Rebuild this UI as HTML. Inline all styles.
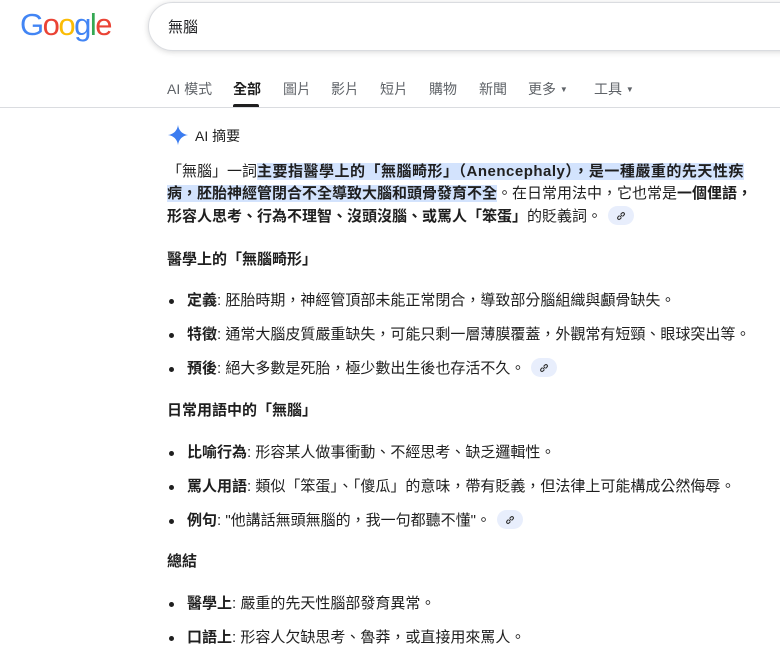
<!DOCTYPE html>
<html><head><meta charset="utf-8">
<style>
*{margin:0;padding:0;box-sizing:border-box}
body{width:780px;height:654px;overflow:hidden;background:#fff;font-family:"Liberation Sans","Noto Sans CJK TC",sans-serif;color:#1f1f1f;position:relative}
.a{position:absolute;white-space:nowrap}
.logo{left:20px;top:7px;font-size:31px;letter-spacing:-1.5px;font-family:"Liberation Sans",sans-serif}
.search{position:absolute;left:148px;top:2px;width:660px;height:49px;border:1px solid #dadce0;border-radius:25px;box-shadow:0 1px 6px rgba(32,33,36,.18)}
.nav{top:79px;font-size:14px;color:#5f6368}
.t{font-size:15px;line-height:22px}
b{font-weight:bold;color:#1f1f1f}
.hl{background:#d3e3fd}
.dot{position:absolute;width:5px;height:5px;border-radius:50%;background:#1f1f1f}
.lk{display:inline-block;width:26px;height:19px;border-radius:10px;background:#e8eefc;vertical-align:middle;margin-left:6px;position:relative;top:-2px}
.lk svg{position:absolute;left:8px;top:5px}
</style></head><body>
<div class="a logo"><span style="color:#4285f4">G</span><span style="color:#ea4335">o</span><span style="color:#fbbc05">o</span><span style="color:#4285f4">g</span><span style="color:#34a853">l</span><span style="color:#ea4335">e</span></div>
<div class="search"></div>
<div class="a" style="left:168px;top:16px;font-size:15px;color:#202124">無腦</div>

<div class="a nav" style="left:167px">AI 模式</div>
<div class="a nav" style="left:233px;color:#1f1f1f;font-weight:bold">全部</div>
<div class="a" style="left:233px;top:104px;width:26px;height:3px;background:#1f1f1f;border-radius:2px 2px 0 0"></div>
<div class="a nav" style="left:283px">圖片</div>
<div class="a nav" style="left:331px">影片</div>
<div class="a nav" style="left:380px">短片</div>
<div class="a nav" style="left:429px">購物</div>
<div class="a nav" style="left:479px">新聞</div>
<div class="a nav" style="left:528px">更多 <span style="font-size:8px;position:relative;top:-2px">▼</span></div>
<div class="a nav" style="left:594px">工具 <span style="font-size:8px;position:relative;top:-2px">▼</span></div>
<div class="a" style="left:0;top:107px;width:780px;height:1px;background:#dadce0"></div>

<svg class="a" style="left:167px;top:124px" width="22" height="22" viewBox="0 0 24 24"><path d="M12 1C12.6 7 17 11.4 23 12 17 12.6 12.6 17 12 23 11.4 17 7 12.6 1 12 7 11.4 11.4 7 12 1Z" fill="#3b7cf0"/></svg>
<div class="a" style="left:195px;top:126px;font-size:14px;color:#1f1f1f">AI 摘要</div>

<div class="a t" style="left:167px;top:161px">「無腦」一詞<span class="hl"><b style="letter-spacing:0.5px">主要指醫學上的「無腦畸形」（Anencephaly），是一種嚴重的先天性疾</b></span></div>
<div class="a t" style="left:167px;top:183px"><span class="hl"><b>病，胚胎神經管閉合不全導致大腦和頭骨發育不全</b></span>。在日常用法中，它也常是<b>一個俚語，</b></div>
<div class="a t" style="left:167px;top:206px"><b>形容人思考、行為不理智、沒頭沒腦、或罵人「笨蛋」</b>的貶義詞。<span class="lk"><svg width="10" height="10" viewBox="0 0 10 10"><path d="M4 6 6 4M3.5 4.5 2 6a1.4 1.4 0 0 0 2 2l1.5-1.5M6.5 5.5 8 4a1.4 1.4 0 0 0-2-2L4.5 3.5" stroke="#333" stroke-width="1.1" fill="none"/></svg></span></div>

<div class="a t" style="left:167px;top:249px"><b>醫學上的「無腦畸形」</b></div>
<div class="dot" style="left:169px;top:299px"></div><div class="a t" style="left:187px;top:290px"><b>定義</b>: 胚胎時期，神經管頂部未能正常閉合，導致部分腦組織與顱骨缺失。</div>
<div class="dot" style="left:169px;top:333px"></div><div class="a t" style="left:187px;top:324px"><b>特徵</b>: 通常大腦皮質嚴重缺失，可能只剩一層薄膜覆蓋，外觀常有短頸、眼球突出等。</div>
<div class="dot" style="left:169px;top:367px"></div><div class="a t" style="left:187px;top:358px"><b>預後</b>: 絕大多數是死胎，極少數出生後也存活不久。<span class="lk"><svg width="10" height="10" viewBox="0 0 10 10"><path d="M4 6 6 4M3.5 4.5 2 6a1.4 1.4 0 0 0 2 2l1.5-1.5M6.5 5.5 8 4a1.4 1.4 0 0 0-2-2L4.5 3.5" stroke="#333" stroke-width="1.1" fill="none"/></svg></span></div>

<div class="a t" style="left:167px;top:400px"><b>日常用語中的「無腦」</b></div>
<div class="dot" style="left:169px;top:451px"></div><div class="a t" style="left:187px;top:442px"><b>比喻行為</b>: 形容某人做事衝動、不經思考、缺乏邏輯性。</div>
<div class="dot" style="left:169px;top:485px"></div><div class="a t" style="left:187px;top:476px"><b>罵人用語</b>: 類似「笨蛋」、「傻瓜」的意味，帶有貶義，但法律上可能構成公然侮辱。</div>
<div class="dot" style="left:169px;top:519px"></div><div class="a t" style="left:187px;top:510px"><b>例句</b>: "他講話無頭無腦的，我一句都聽不懂"。<span class="lk"><svg width="10" height="10" viewBox="0 0 10 10"><path d="M4 6 6 4M3.5 4.5 2 6a1.4 1.4 0 0 0 2 2l1.5-1.5M6.5 5.5 8 4a1.4 1.4 0 0 0-2-2L4.5 3.5" stroke="#333" stroke-width="1.1" fill="none"/></svg></span></div>

<div class="a t" style="left:167px;top:551px"><b>總結</b></div>
<div class="dot" style="left:169px;top:602px"></div><div class="a t" style="left:187px;top:593px"><b>醫學上</b>: 嚴重的先天性腦部發育異常。</div>
<div class="dot" style="left:169px;top:636px"></div><div class="a t" style="left:187px;top:627px"><b>口語上</b>: 形容人欠缺思考、魯莽，或直接用來罵人。</div>
</body></html>
